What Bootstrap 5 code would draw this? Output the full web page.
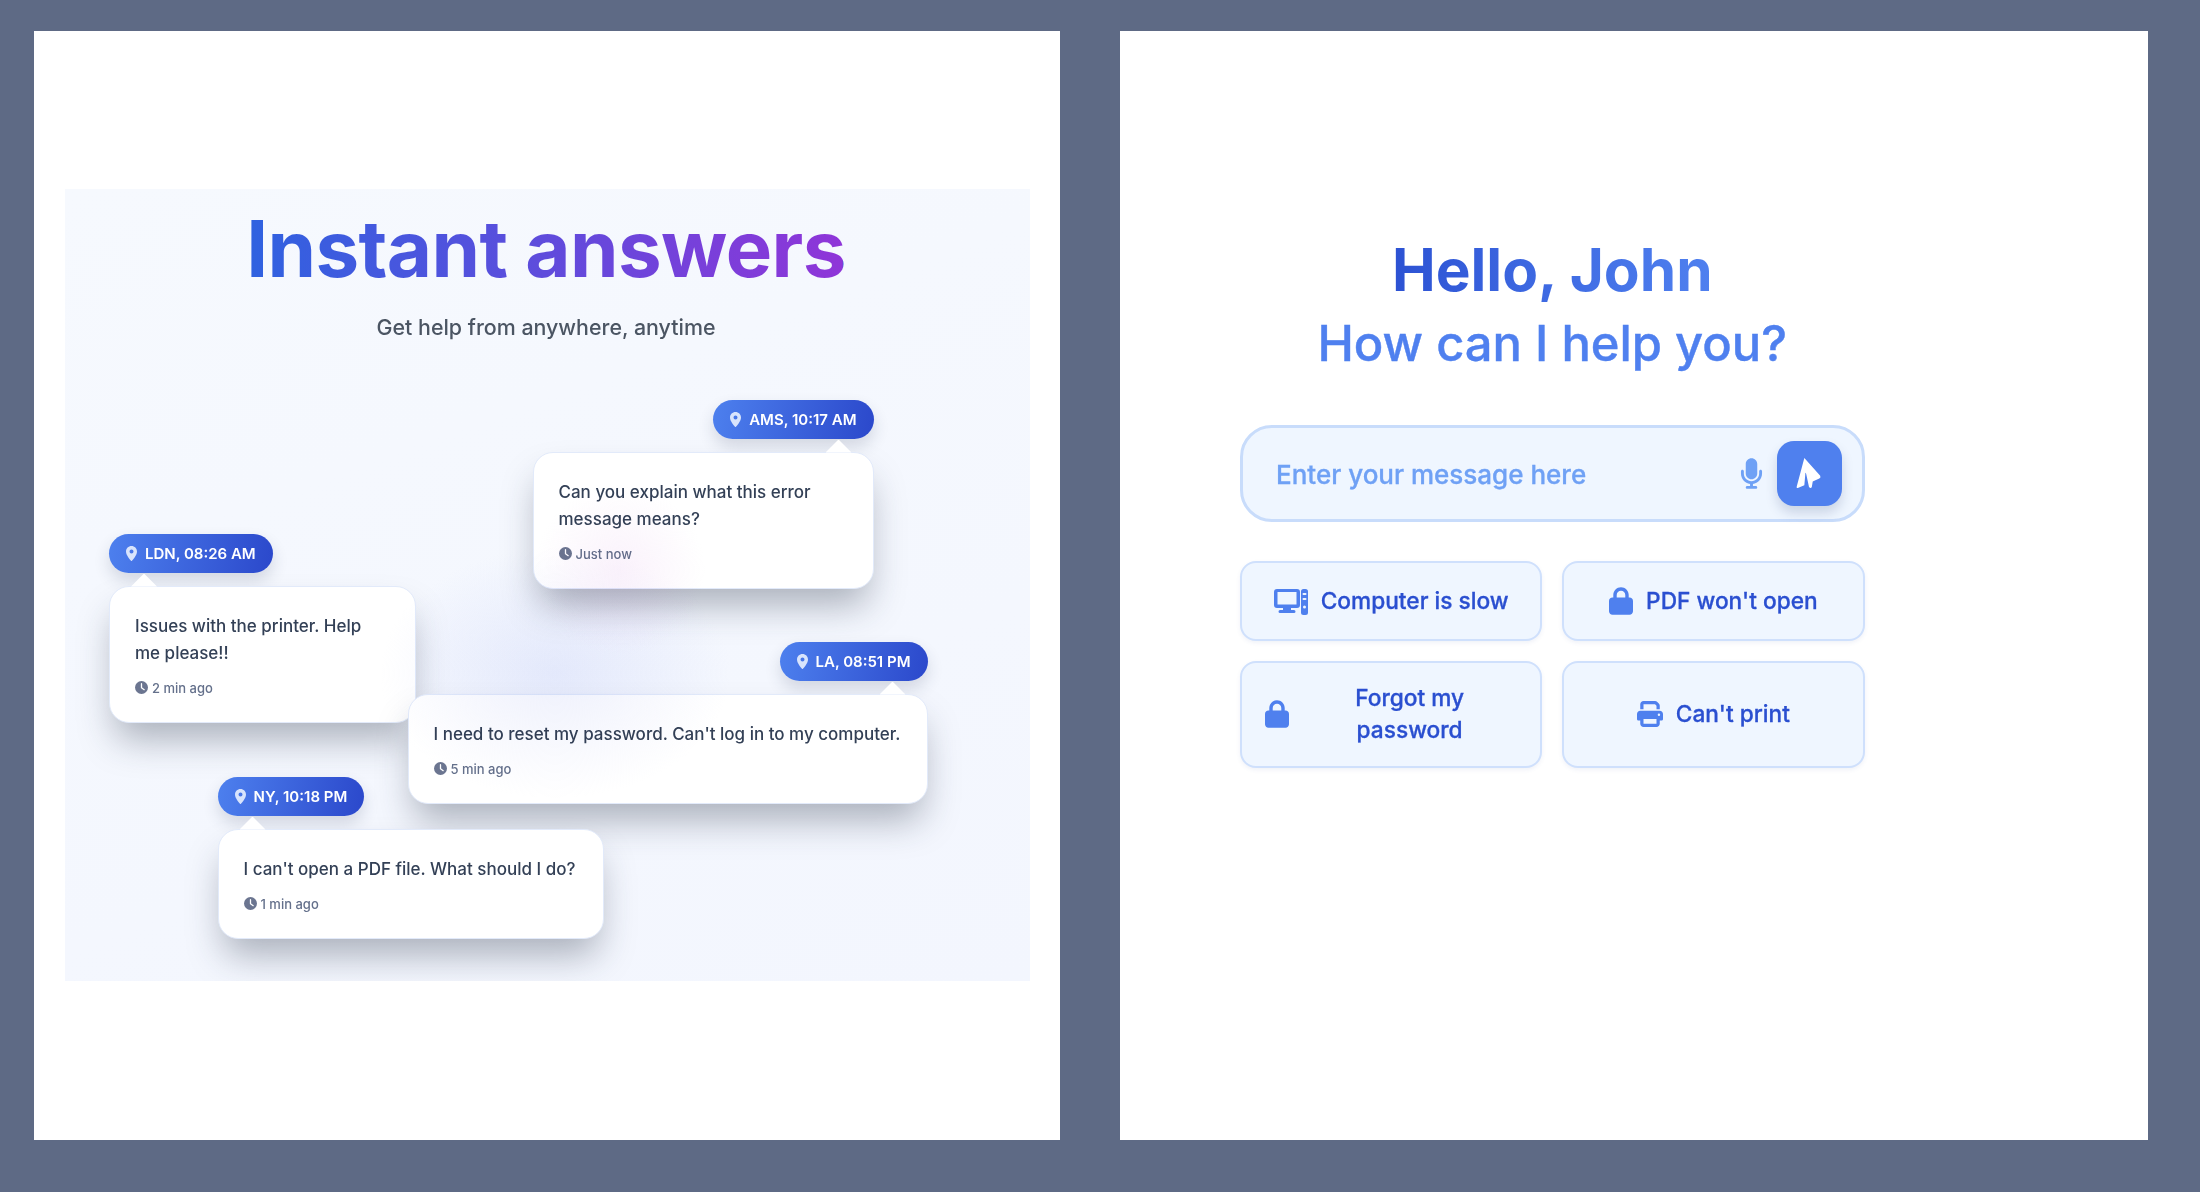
<!DOCTYPE html>
<html lang="en">
<head>
<meta charset="utf-8">
<title>Instant answers</title>
<link href="https://cdn.jsdelivr.net/npm/bootstrap@5.3.0/dist/css/bootstrap.min.css" rel="stylesheet">
<style>
html,body{height:100%}
body{background:#5e6a85;font-family:Inter,"Noto Sans",sans-serif;overflow:hidden;padding:31px 52px 52px 34px;gap:59.5px}
.sheet{background:#fff;min-width:0}
.sheet-left{flex:0 0 1026px}
.sheet-right{flex:1 1 0}
.stage{position:relative;width:965px;height:792px;margin:0 0 1px 31px;background:linear-gradient(160deg,#f6f9fe 0%,#f3f6fe 100%);overflow:hidden}
.glow{position:absolute;inset:0;z-index:5;pointer-events:none;mix-blend-mode:multiply;background:
 radial-gradient(circle 85px at 555px 381px,rgba(243,222,246,.4),rgba(243,222,246,0) 100%),
 radial-gradient(ellipse 175px 125px at 490px 484px,rgba(224,228,250,.55),rgba(224,228,250,0) 100%)}
.heads{padding-right:3px}
.big-title{font-size:78px;line-height:94px;font-weight:700;letter-spacing:-.6px;padding-top:13px;margin:0;background:linear-gradient(90deg,#2f62e0,#8f35d8);background-size:594px 100%;background-position:center;-webkit-background-clip:text;background-clip:text;color:transparent}
.sub-title{font-size:21.4px;font-weight:500;color:#4b5563;margin:16px 0 0;line-height:30px}
.bubble{position:absolute;gap:12.5px}
.at-ams{left:467.5px;top:211px;width:341px}
.at-ldn{left:44px;top:345px;width:307px}
.at-ldn .note-text{max-width:240px}
.at-la{left:342.5px;top:453px;width:520px}
.at-ny{left:152.500px;top:588px;width:386px}
.pill{height:39px;border-radius:20px;padding:0 17px 0 17px;font-size:15px;font-weight:600;color:#fff;background:linear-gradient(100deg,#4d80ee,#2b48cb);box-shadow:0 8px 16px rgba(40,50,80,.16);gap:8px;line-height:1}
.pill svg{width:11px;height:15px;flex:none}
.note{border:1px solid #e2eafa;border-radius:20px;background:#fff;padding:26px 22px 24px 25px;box-shadow:0 22px 36px -6px rgba(40,50,70,.36);width:100%}
.note::before{content:"";position:absolute;top:-13px;width:26px;height:13px;background:#fff;clip-path:polygon(50% 0,100% 100%,0 100%)}
.tail-r::before{right:21px}
.tail-l::before{left:21px}
.note-text{font-size:17px;line-height:27px;font-weight:500;color:#334056;margin:0 0 11px}
.note-time{font-size:13px;line-height:20px;color:#64708b;gap:4px;font-weight:500}
.note-time svg{width:13px;height:13px;flex:none}
.ask{width:624.5px;margin-left:120.5px;padding-top:203px}
.hello{font-size:58.5px;line-height:72px;font-weight:700;margin:0;background:linear-gradient(90deg,#2c52d3 0%,#3f6be3 50%,#4f80ef 100%);background-size:320px 100%;background-position:center;background-repeat:no-repeat;-webkit-background-clip:text;background-clip:text;color:transparent}
.howcan{font-size:48.9px;line-height:60px;font-weight:500;-webkit-text-stroke:.4px #4f80ef;color:#4f80ef;margin:8px 0 0}
.msgbox{height:97px;border:3px solid #c8dcfb;border-radius:32px;background:#eff6ff;margin-top:51px;padding:0 20px 0 33px;gap:14px}
.msgbox .form-control{background:transparent;border:0;box-shadow:none;padding:2px 0 0;font-size:26px;font-weight:500;color:#2c52d3;height:auto}
.msgbox .form-control::placeholder{color:#6fa1f5;opacity:1;-webkit-text-stroke:.3px #6fa1f5}
.mic{width:23px;height:33px;fill:#6fa1f5;flex:none}
.send{width:65px;height:65px;border-radius:17px;background:#4f80ee;border:0;box-shadow:0 7px 12px rgba(40,60,110,.18);padding:0 0 2px;flex:none}
.send svg{width:28px;height:34px}
.chips{display:grid;grid-template-columns:1fr 1fr;column-gap:20px;row-gap:20px;margin-top:39px}
.chip{height:80px;background:#eff6ff;border:2px solid #cfe0fc;border-radius:16px;color:#2a4fd0;font-size:22.7px;font-weight:500;-webkit-text-stroke:.3px #2a4fd0;line-height:32px;padding:0 23px;gap:13px;box-shadow:0 2px 4px rgba(60,90,160,.08)}
.chip:hover{background:#eff6ff;color:#2a4fd0;border-color:#cfe0fc}
.chip.tall{height:107px;padding:0 23px 2px}
.chip svg{fill:#4f80ee;flex:none;-webkit-text-stroke:0}
.chip-label{flex:1 1 0;text-align:center}
.ic-pc{width:34px;height:28px}
.ic-lock{width:24px;height:28px}
.ic-print{width:26px;height:28px}
</style>
</head>
<body class="d-flex">
<main class="sheet sheet-left d-flex align-items-center">
  <section class="stage">
    <div class="heads text-center">
      <h1 class="big-title d-inline-block">Instant answers</h1>
      <p class="sub-title">Get help from anywhere, anytime</p>
    </div>

    <div class="bubble at-ams d-flex flex-column align-items-end">
      <div class="pill d-inline-flex align-items-center"><svg viewBox="0 0 22 30"><use href="#pin"/></svg>AMS, 10:17 AM</div>
      <div class="note tail-r position-relative">
        <p class="note-text">Can you explain what this error message means?</p>
        <div class="note-time d-flex align-items-center"><svg viewBox="0 0 24 24"><use href="#clock"/></svg>Just now</div>
      </div>
    </div>

    <div class="bubble at-ldn d-flex flex-column align-items-start">
      <div class="pill d-inline-flex align-items-center"><svg viewBox="0 0 22 30"><use href="#pin"/></svg>LDN, 08:26 AM</div>
      <div class="note tail-l position-relative">
        <p class="note-text">Issues with the printer. Help me please!!</p>
        <div class="note-time d-flex align-items-center"><svg viewBox="0 0 24 24"><use href="#clock"/></svg>2 min ago</div>
      </div>
    </div>

    <div class="bubble at-la d-flex flex-column align-items-end">
      <div class="pill d-inline-flex align-items-center"><svg viewBox="0 0 22 30"><use href="#pin"/></svg>LA, 08:51 PM</div>
      <div class="note tail-r position-relative">
        <p class="note-text">I need to reset my password. Can't log in to my computer.</p>
        <div class="note-time d-flex align-items-center"><svg viewBox="0 0 24 24"><use href="#clock"/></svg>5 min ago</div>
      </div>
    </div>

    <div class="bubble at-ny d-flex flex-column align-items-start">
      <div class="pill d-inline-flex align-items-center"><svg viewBox="0 0 22 30"><use href="#pin"/></svg>NY, 10:18 PM</div>
      <div class="note tail-l position-relative">
        <p class="note-text">I can't open a PDF file. What should I do?</p>
        <div class="note-time d-flex align-items-center"><svg viewBox="0 0 24 24"><use href="#clock"/></svg>1 min ago</div>
      </div>
    </div>
    <div class="glow"></div>
  </section>
</main>

<main class="sheet sheet-right">
  <section class="ask">
    <div class="text-center">
      <h2 class="hello">Hello, John</h2>
      <p class="howcan">How can I help you?</p>
    </div>
    <div class="msgbox d-flex align-items-center">
      <input class="form-control flex-grow-1" type="text" placeholder="Enter your message here" aria-label="Message">
      <svg class="mic" viewBox="0 0 384 512"><path d="M192 0C139 0 96 43 96 96V256c0 53 43 96 96 96s96-43 96-96V96c0-53-43-96-96-96zM64 216c0-13.3-10.7-24-24-24s-24 10.7-24 24v40c0 89.1 66.2 162.7 152 174.4V464H120c-13.3 0-24 10.7-24 24s10.7 24 24 24h72 72c13.3 0 24-10.7 24-24s-10.7-24-24-24H216V430.4c85.8-11.7 152-85.3 152-174.4V216c0-13.3-10.7-24-24-24s-24 10.7-24 24v40c0 70.7-57.3 128-128 128s-128-57.3-128-128V216z"/></svg>
      <button class="btn send d-flex align-items-center justify-content-center" type="button" aria-label="Send">
        <svg viewBox="76 23 30 36"><path fill="#fff" d="M86 25 L103 44 Q104 46 102 47 L95 50 L94 56 Q93 58 91 56 L88 42 Q87 39 87 43 L86 54 L79 57 Q77 57.5 78 55 Z"/></svg>
      </button>
    </div>
    <div class="chips">
      <button class="btn chip d-flex align-items-center justify-content-center" type="button">
        <svg class="ic-pc" viewBox="0 0 34 28"><path fill-rule="evenodd" d="M3 2h20a3 3 0 0 1 3 3v13a3 3 0 0 1-3 3h-6v2h3a1.5 1.5 0 0 1 0 3H6a1.5 1.5 0 0 1 0-3h3v-2H3a3 3 0 0 1-3-3V5a3 3 0 0 1 3-3zm.5 3v12.5h19V5z"/><path fill-rule="evenodd" d="M29.5 2h2A2.5 2.5 0 0 1 34 4.500v21a2.500 2.500 0 0 1-2.500 2.500h-2A2.500 2.500 0 0 1 27 25.500v-21A2.500 2.500 0 0 1 29.500 2zM29.500 6a1 1 0 0 0 0 2h2a1 1 0 0 0 0-2zm0 5a1 1 0 0 0 0 2h2a1 1 0 0 0 0-2zm1 7.500a1.500 1.500 0 1 0 0 3 1.500 1.500 0 0 0 0-3z"/></svg>
        <span>Computer is slow</span>
      </button>
      <button class="btn chip d-flex align-items-center justify-content-center" type="button">
        <svg class="ic-lock" viewBox="0 0 448 512"><use href="#lock"/></svg>
        <span>PDF won't open</span>
      </button>
      <button class="btn chip tall d-flex align-items-center justify-content-center" type="button">
        <svg class="ic-lock" viewBox="0 0 448 512"><use href="#lock"/></svg>
        <span class="chip-label">Forgot my password</span>
      </button>
      <button class="btn chip tall d-flex align-items-center justify-content-center" type="button">
        <svg class="ic-print" viewBox="0 0 512 512"><path d="M128 0C92.700 0 64 28.700 64 64v96h64V64H354.700L384 93.300V160h64V93.300c0-17-6.700-33.300-18.700-45.300L400 18.700C388 6.700 371.700 0 354.700 0H128zM384 352v32 64H128V384 368 352H384zm64 32h32c17.700 0 32-14.300 32-32V256c0-35.300-28.700-64-64-64H64c-35.300 0-64 28.700-64 64v96c0 17.700 14.300 32 32 32H64v64c0 35.300 28.700 64 64 64H384c35.300 0 64-28.700 64-64V384zM432 248a24 24 0 1 1 0 48 24 24 0 1 1 0-48z"/></svg>
        <span>Can't print</span>
      </button>
    </div>
  </section>
</main>

<svg width="0" height="0" class="position-absolute" aria-hidden="true">
  <defs>
    <g id="pin"><path fill="#d8e4fc" fill-rule="evenodd" d="M11 0C4.900 0 0 4.900 0 11c0 7.500 8.600 16.800 10 18.500.5.600 1.500.6 2 0C13.400 27.800 22 18.500 22 11 22 4.900 17.100 0 11 0zm0 7a4 4 0 1 1 0 8 4 4 0 0 1 0-8z"/></g>
    <g id="clock"><circle cx="12" cy="12" r="12" fill="#6b7590"/><path d="M12 5v7.500l5 3.500" fill="none" stroke="#fff" stroke-width="2.400" stroke-linecap="round" stroke-linejoin="round"/></g>
    <g id="lock"><path d="M144 144v48H304V144c0-44.200-35.800-80-80-80s-80 35.800-80 80zM80 192V144C80 64.500 144.500 0 224 0s144 64.500 144 144v48h16c35.300 0 64 28.700 64 64V448c0 35.300-28.700 64-64 64H64c-35.300 0-64-28.700-64-64V256c0-35.300 28.700-64 64-64H80z"/></g>
  </defs>
</svg>
</body>
</html>
